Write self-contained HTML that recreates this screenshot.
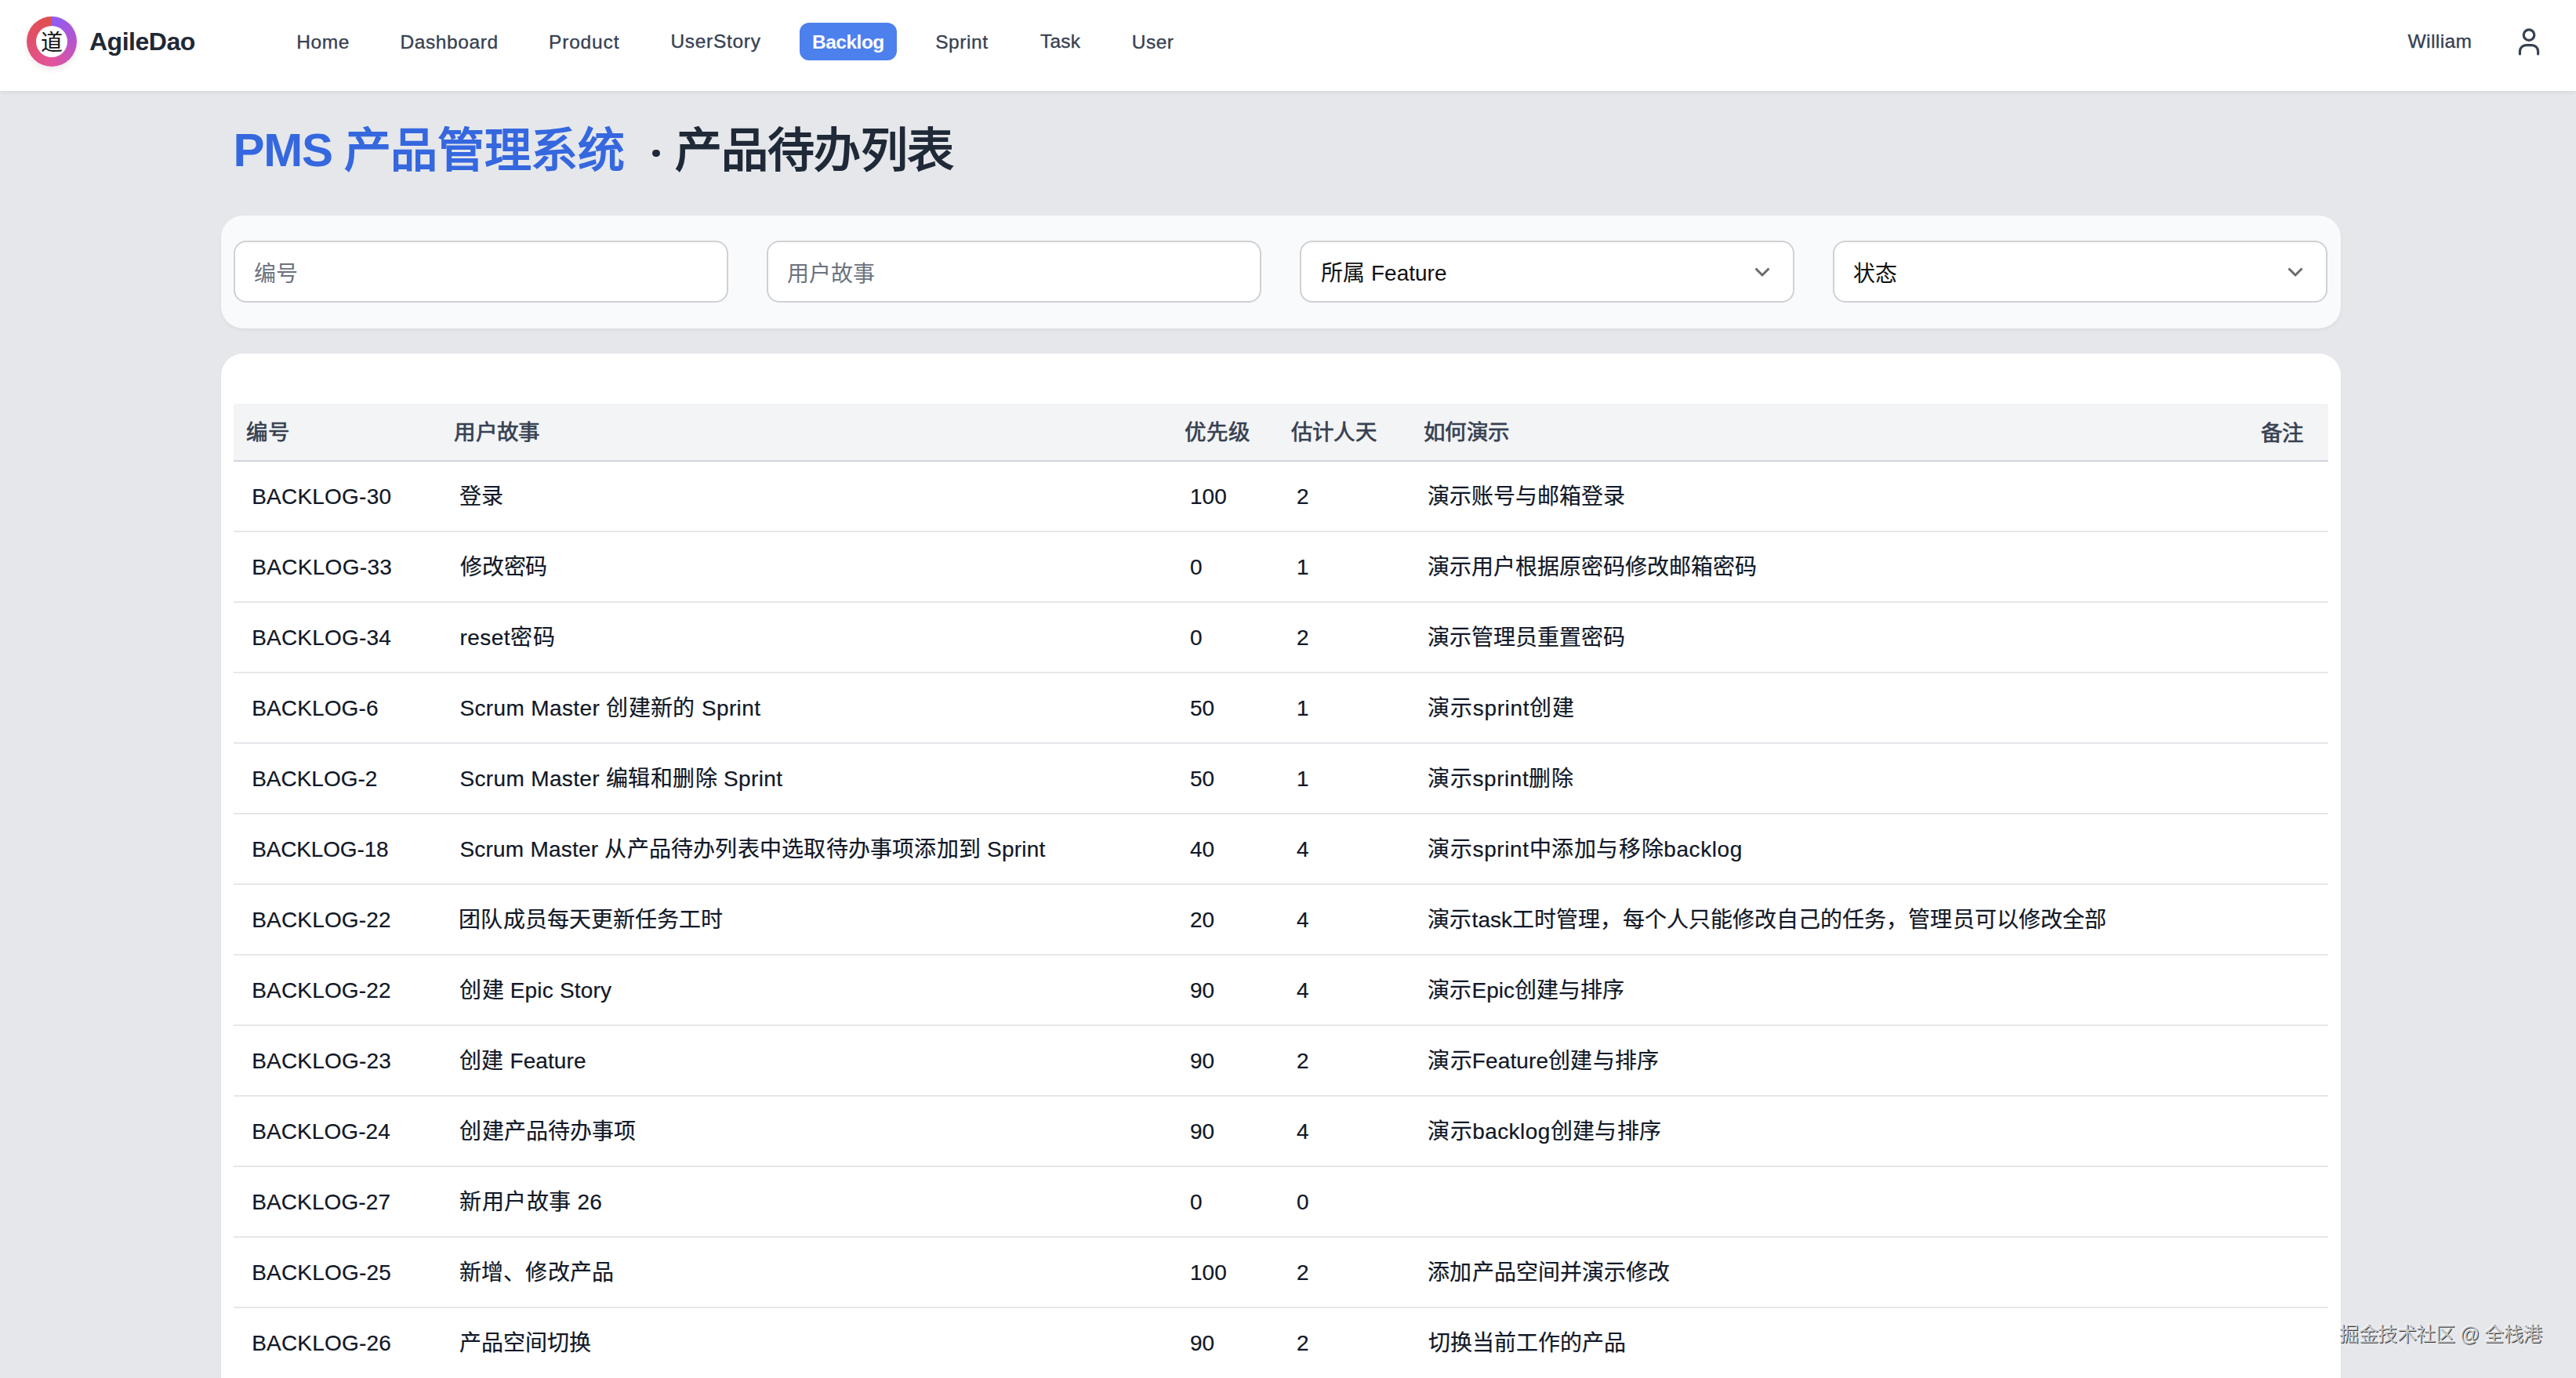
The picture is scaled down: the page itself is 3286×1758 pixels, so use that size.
<!DOCTYPE html>
<html lang="zh-CN">
<head>
<meta charset="utf-8">
<style>
html,body{margin:0;padding:0;}
body{width:3286px;height:1758px;overflow:hidden;position:relative;background:#e5e7eb;font-family:"Liberation Sans",sans-serif;color:#111827;}
.a{position:absolute;white-space:nowrap;}
#hdr{left:0;top:0;width:3286px;height:116px;background:#fff;box-shadow:0 3px 4px rgba(0,0,0,0.05);}
.logo{left:34px;top:21px;width:64px;height:64px;border-radius:50%;background:conic-gradient(from 0deg,#8d5cf4 0deg,#b654cc 90deg,#e2549a 180deg,#e1506e 270deg,#e04f4c 360deg);box-shadow:0 4px 8px rgba(0,0,0,0.08);}
.logo .in{position:absolute;left:12px;top:12px;width:40px;height:40px;border-radius:50%;background:#fff;font-size:28px;line-height:44px;text-align:center;color:#111;}
.brand{font-size:32px;font-weight:bold;line-height:48px;color:#1f2937;}
.nav{font-size:24.5px;line-height:48px;color:#374151;-webkit-text-stroke:0.35px #374151;}
.btn{left:1020px;top:29px;width:124px;height:48px;border-radius:12px;background:#4c80ed;}
.nav.btnt{color:#fff;font-weight:bold;-webkit-text-stroke:0;}
.title{font-size:60px;font-weight:bold;line-height:80px;}
.tb{color:#3567df;}
.td2{color:#1f2937;}
.panel{left:282px;top:275px;width:2704px;height:144px;border-radius:28px;background:#f9fafb;box-shadow:0 2px 4px rgba(0,0,0,0.05);}
.inp{top:307px;width:631px;height:79px;box-sizing:border-box;border:2px solid #cfd1d5;border-radius:16px;background:#fff;}
.ph{font-size:28px;line-height:40px;}
.gray{color:#6b7280;}
.dark{color:#111;}
.card{left:282px;top:451px;width:2704px;height:1400px;border-radius:28px;background:#fff;box-shadow:0 1px 3px rgba(0,0,0,0.05);}
.thead{left:298px;top:515px;width:2672px;height:72px;background:#f3f4f6;border-bottom:2px solid #d1d5db;border-radius:4px 4px 0 0;}
.th{font-size:27.5px;line-height:40px;font-weight:400;color:#374151;-webkit-text-stroke:0.7px #374151;}
.row{left:298px;width:2672px;height:88px;border-bottom:2px solid #e5e7eb;}
.td{font-size:28px;line-height:40px;color:#111827;-webkit-text-stroke:0.2px #111827;}
.wm{font-size:25px;line-height:36px;color:#c8c8c8;text-shadow:1px 1px 0 rgba(20,20,20,0.85),-1px -1px 0 rgba(255,255,255,0.9);}
</style>
</head>
<body>
<div id="hdr" class="a"></div>
<div class="a logo"><div class="in">道</div></div>
<div class="a brand" id="brand" style="left:114.0px;top:28.6px;letter-spacing:-0.486px">AgileDao</div>
<div class="a nav" id="n_home" style="left:378.2px;top:30.0px;letter-spacing:0.6px">Home</div>
<div class="a nav" id="n_dash" style="left:510.4px;top:29.6px;letter-spacing:0.6px">Dashboard</div>
<div class="a nav" id="n_prod" style="left:700.0px;top:29.6px;letter-spacing:0.833px">Product</div>
<div class="a nav" id="n_us" style="left:855.4px;top:29.2px;letter-spacing:0.7px">UserStory</div>
<div class="a btn"></div>
<div class="a nav btnt" id="n_back" style="left:1036.0px;top:30.0px;letter-spacing:-0.5px">Backlog</div>
<div class="a nav" id="n_spr" style="left:1193.2px;top:29.6px;letter-spacing:0.56px">Sprint</div>
<div class="a nav" id="n_task" style="left:1327.0px;top:29.2px;letter-spacing:0.2px">Task</div>
<div class="a nav" id="n_user" style="left:1443.8px;top:30.0px;letter-spacing:0.467px">User</div>
<div class="a nav" id="william" style="left:3071.6px;top:29.0px;letter-spacing:0.4px">William</div>
<svg class="a" style="left:3206px;top:30px" width="40" height="44" viewBox="0 0 40 44">
<circle cx="20" cy="14.6" r="6.8" fill="none" stroke="#374151" stroke-width="3.2"/>
<path d="M8.4 39V35.6a8 8 0 0 1 8-8h7.2a8 8 0 0 1 8 8V39" fill="none" stroke="#374151" stroke-width="3.2" stroke-linecap="round"/>
</svg>
<div class="a title tb" id="t_pms" style="left:297.6px;top:151.8px;letter-spacing:-1.3px">PMS</div>
<div class="a title tb" id="t_cn1" style="left:438.6px;top:153.0px;letter-spacing:-0.32px">产品管理系统</div>
<div class="a" style="left:832px;top:190.5px;width:9.5px;height:9.5px;border-radius:50%;background:#1f2937"></div>
<div class="a title td2" id="t_cn2" style="left:860.6px;top:153.4px;letter-spacing:-0.72px">产品待办列表</div>
<div class="a panel"></div>
<div class="a inp" style="left:298px"></div>
<div class="a inp" style="left:978px"></div>
<div class="a inp" style="left:1658px"></div>
<div class="a inp" style="left:2338px"></div>
<div class="a ph gray" id="p1" style="left:323.8px;top:330.0px;letter-spacing:-0.2px">编号</div>
<div class="a ph gray" id="p2" style="left:1003.6px;top:330.0px;letter-spacing:0.2px">用户故事</div>
<div class="a ph dark" id="p3" style="left:1685.2px;top:329.0px;letter-spacing:-0.0px">所属 Feature</div>
<div class="a ph dark" id="p4" style="left:2363.8px;top:330.0px;letter-spacing:0.0px">状态</div>
<svg class="a" style="left:2236px;top:339px" width="24" height="16" viewBox="0 0 24 16"><path d="M3.5 3.5l8.5 8.5 8.5-8.5" fill="none" stroke="#6b6b6b" stroke-width="3"/></svg>
<svg class="a" style="left:2916px;top:339px" width="24" height="16" viewBox="0 0 24 16"><path d="M3.5 3.5l8.5 8.5 8.5-8.5" fill="none" stroke="#6b6b6b" stroke-width="3"/></svg>
<div class="a card"></div>
<div class="a thead"></div>
<div class="a th" id="h1" style="left:314.4px;top:532.0px;letter-spacing:0.6px">编号</div>
<div class="a th" id="h2" style="left:579.4px;top:532.4px;letter-spacing:0.333px">用户故事</div>
<div class="a th" id="h3" style="left:1511.2px;top:532.2px;letter-spacing:0.7px">优先级</div>
<div class="a th" id="h4" style="left:1646.6px;top:532.0px;letter-spacing:0.4px">估计人天</div>
<div class="a th" id="h5" style="left:1815.6px;top:532.0px;letter-spacing:0.466px">如何演示</div>
<div class="a th" id="h6" style="left:2884.0px;top:532.8px;letter-spacing:0.0px">备注</div>
<div class="a row" style="top:589px"></div>
<div class="a td" id="r0c0" style="left:321.2px;top:614.0px;letter-spacing:0.222px">BACKLOG-30</div>
<div class="a td" id="r0c1" style="left:586.4px;top:614.0px;letter-spacing:-0.6px">登录</div>
<div class="a td" id="r0c2" style="left:1518px;top:614px;letter-spacing:0px">100</div>
<div class="a td" id="r0c3" style="left:1654px;top:614px;letter-spacing:0px">2</div>
<div class="a td" id="r0c4" style="left:1821.4px;top:614.0px;letter-spacing:-0.05px">演示账号与邮箱登录</div>
<div class="a row" style="top:679px"></div>
<div class="a td" id="r1c0" style="left:321.2px;top:704.0px;letter-spacing:0.311px">BACKLOG-33</div>
<div class="a td" id="r1c1" style="left:587.4px;top:704.0px;letter-spacing:-0.4px">修改密码</div>
<div class="a td" id="r1c2" style="left:1518px;top:704px;letter-spacing:0px">0</div>
<div class="a td" id="r1c3" style="left:1654px;top:704px;letter-spacing:0px">1</div>
<div class="a td" id="r1c4" style="left:1821.4px;top:704.0px;letter-spacing:-0.014px">演示用户根据原密码修改邮箱密码</div>
<div class="a row" style="top:769px"></div>
<div class="a td" id="r2c0" style="left:321.2px;top:794.0px;letter-spacing:0.2px">BACKLOG-34</div>
<div class="a td" id="r2c1" style="left:586.4px;top:794.0px;letter-spacing:0.5px">reset密码</div>
<div class="a td" id="r2c2" style="left:1518px;top:794px;letter-spacing:0px">0</div>
<div class="a td" id="r2c3" style="left:1654px;top:794px;letter-spacing:0px">2</div>
<div class="a td" id="r2c4" style="left:1821.4px;top:794.0px;letter-spacing:-0.025px">演示管理员重置密码</div>
<div class="a row" style="top:859px"></div>
<div class="a td" id="r3c0" style="left:321.2px;top:884.0px;letter-spacing:0.125px">BACKLOG-6</div>
<div class="a td" id="r3c1" style="left:586.4px;top:884.0px;letter-spacing:0.374px">Scrum Master 创建新的 Sprint</div>
<div class="a td" id="r3c2" style="left:1518px;top:884px;letter-spacing:0px">50</div>
<div class="a td" id="r3c3" style="left:1654px;top:884px;letter-spacing:0px">1</div>
<div class="a td" id="r3c4" style="left:1821.4px;top:884.0px;letter-spacing:0.667px">演示sprint创建</div>
<div class="a row" style="top:949px"></div>
<div class="a td" id="r4c0" style="left:321.2px;top:974.0px;letter-spacing:-0.025px">BACKLOG-2</div>
<div class="a td" id="r4c1" style="left:586.4px;top:974.0px;letter-spacing:0.358px">Scrum Master 编辑和删除 Sprint</div>
<div class="a td" id="r4c2" style="left:1518px;top:974px;letter-spacing:0px">50</div>
<div class="a td" id="r4c3" style="left:1654px;top:974px;letter-spacing:0px">1</div>
<div class="a td" id="r4c4" style="left:1821.4px;top:974.0px;letter-spacing:0.556px">演示sprint删除</div>
<div class="a row" style="top:1039px"></div>
<div class="a td" id="r5c0" style="left:321.2px;top:1064.0px;letter-spacing:-0.156px">BACKLOG-18</div>
<div class="a td" id="r5c1" style="left:586.4px;top:1064.0px;letter-spacing:0.222px">Scrum Master 从产品待办列表中选取待办事项添加到 Sprint</div>
<div class="a td" id="r5c2" style="left:1518px;top:1064px;letter-spacing:0px">40</div>
<div class="a td" id="r5c3" style="left:1654px;top:1064px;letter-spacing:0px">4</div>
<div class="a td" id="r5c4" style="left:1821.4px;top:1064.0px;letter-spacing:0.6px">演示sprint中添加与移除backlog</div>
<div class="a row" style="top:1129px"></div>
<div class="a td" id="r6c0" style="left:321.2px;top:1154.0px;letter-spacing:0.178px">BACKLOG-22</div>
<div class="a td" id="r6c1" style="left:585.4px;top:1154.0px;letter-spacing:0.073px">团队成员每天更新任务工时</div>
<div class="a td" id="r6c2" style="left:1518px;top:1154px;letter-spacing:0px">20</div>
<div class="a td" id="r6c3" style="left:1654px;top:1154px;letter-spacing:0px">4</div>
<div class="a td" id="r6c4" style="left:1821.4px;top:1154.0px;letter-spacing:0.069px">演示task工时管理，每个人只能修改自己的任务，管理员可以修改全部</div>
<div class="a row" style="top:1219px"></div>
<div class="a td" id="r7c0" style="left:321.2px;top:1244.0px;letter-spacing:0.178px">BACKLOG-22</div>
<div class="a td" id="r7c1" style="left:586.4px;top:1244.0px;letter-spacing:0.183px">创建 Epic Story</div>
<div class="a td" id="r7c2" style="left:1518px;top:1244px;letter-spacing:0px">90</div>
<div class="a td" id="r7c3" style="left:1654px;top:1244px;letter-spacing:0px">4</div>
<div class="a td" id="r7c4" style="left:1821.4px;top:1244.0px;letter-spacing:0.04px">演示Epic创建与排序</div>
<div class="a row" style="top:1309px"></div>
<div class="a td" id="r8c0" style="left:321.2px;top:1334.0px;letter-spacing:0.2px">BACKLOG-23</div>
<div class="a td" id="r8c1" style="left:586.4px;top:1334.0px;letter-spacing:0.089px">创建 Feature</div>
<div class="a td" id="r8c2" style="left:1518px;top:1334px;letter-spacing:0px">90</div>
<div class="a td" id="r8c3" style="left:1654px;top:1334px;letter-spacing:0px">2</div>
<div class="a td" id="r8c4" style="left:1821.4px;top:1334.0px;letter-spacing:0.154px">演示Feature创建与排序</div>
<div class="a row" style="top:1399px"></div>
<div class="a td" id="r9c0" style="left:321.2px;top:1424.0px;letter-spacing:0.089px">BACKLOG-24</div>
<div class="a td" id="r9c1" style="left:586.4px;top:1424.0px;letter-spacing:0.143px">创建产品待办事项</div>
<div class="a td" id="r9c2" style="left:1518px;top:1424px;letter-spacing:0px">90</div>
<div class="a td" id="r9c3" style="left:1654px;top:1424px;letter-spacing:0px">4</div>
<div class="a td" id="r9c4" style="left:1821.4px;top:1424.0px;letter-spacing:0.415px">演示backlog创建与排序</div>
<div class="a row" style="top:1489px"></div>
<div class="a td" id="r10c0" style="left:321.2px;top:1514.0px;letter-spacing:0.111px">BACKLOG-27</div>
<div class="a td" id="r10c1" style="left:586.4px;top:1514.0px;letter-spacing:0.371px">新用户故事 26</div>
<div class="a td" id="r10c2" style="left:1518px;top:1514px;letter-spacing:0px">0</div>
<div class="a td" id="r10c3" style="left:1654px;top:1514px;letter-spacing:0px">0</div>
<div class="a row" style="top:1579px"></div>
<div class="a td" id="r11c0" style="left:321.2px;top:1604.0px;letter-spacing:0.2px">BACKLOG-25</div>
<div class="a td" id="r11c1" style="left:586.4px;top:1604.0px;letter-spacing:0.033px">新增、修改产品</div>
<div class="a td" id="r11c2" style="left:1518px;top:1604px;letter-spacing:0px">100</div>
<div class="a td" id="r11c3" style="left:1654px;top:1604px;letter-spacing:0px">2</div>
<div class="a td" id="r11c4" style="left:1821.4px;top:1604.0px;letter-spacing:0.08px">添加产品空间并演示修改</div>
<div class="a row" style="top:1669px;border-bottom:none"></div>
<div class="a td" id="r12c0" style="left:321.2px;top:1694.0px;letter-spacing:0.2px">BACKLOG-26</div>
<div class="a td" id="r12c1" style="left:586.4px;top:1694.0px;letter-spacing:-0.12px">产品空间切换</div>
<div class="a td" id="r12c2" style="left:1518px;top:1694px;letter-spacing:0px">90</div>
<div class="a td" id="r12c3" style="left:1654px;top:1694px;letter-spacing:0px">2</div>
<div class="a td" id="r12c4" style="left:1822.4px;top:1694.0px;letter-spacing:-0.075px">切换当前工作的产品</div>
<div class="a wm" id="wm" style="left:2984.0px;top:1684.2px;letter-spacing:-0.45px">掘金技术社区 @ 全栈港</div>
</body>
</html>
